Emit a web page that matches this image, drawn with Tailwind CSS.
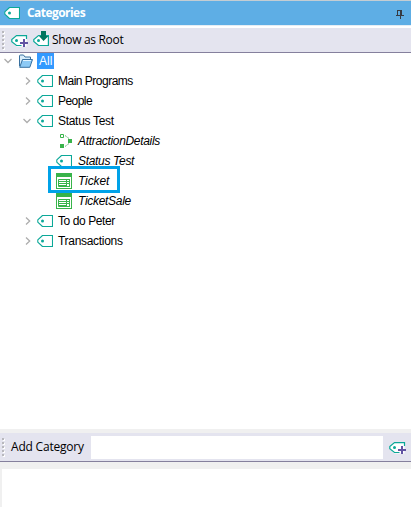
<!DOCTYPE html>
<html lang="en">
<head>
<meta charset="utf-8">
<title>Categories</title>
<script src="https://cdn.jsdelivr.net/npm/@tailwindcss/browser@4"></script>
</head>
<body class="w-[411px] h-[507px] overflow-hidden bg-white text-black">
<svg class="hidden">
  <symbol id="tag" viewBox="0 0 16 12"><path d="M5.5 .5H15.5V11.5H5.5L.8 7.2V4.8Z" fill="#fff" stroke="#0ba898" stroke-width="1.1" stroke-linejoin="round"/><circle cx="5.5" cy="6" r="1.5" fill="#0ba898"/></symbol>
  <symbol id="tagplus" viewBox="0 0 17 13"><path d="M5.5 .5H15.5V11.5H5.5L.8 7V4.5Z" fill="#fff"/><path d="M10.5 10.5H5.5L.8 6.8V4.5L5.5 .6H15.5V4" fill="none" stroke="#0ba898" stroke-width="1.2"/><circle cx="5.5" cy="5.5" r="1.5" fill="#0ba898"/><path d="M13 4V12M9 8H17" stroke="#6254a3" stroke-width="2"/></symbol>
  <symbol id="right" viewBox="0 0 6 8"><path d="M1 .5L4.7 4L1 7.5" fill="none" stroke="#adadad" stroke-width="1.3"/></symbol>
  <symbol id="down" viewBox="0 0 8 6"><path d="M.5 1L4 4.5L7.5 1" fill="none" stroke="#adadad" stroke-width="1.3"/></symbol>
  <symbol id="form" viewBox="0 0 16 16"><path d="M0 0H16V16H0Z" fill="#38b34a"/><path d="M1 4H15V15H1Z" fill="#fff"/><path d="M2.5 6.5H13.5V13.5H2.5ZM2.5 8.5H13.5M2.5 10.5H13.5M2.5 12.5H13.5" fill="none" stroke="#38b34a"/><path d="M10 6H14V14H10Z" fill="#38b34a"/><path d="M11 7h2v1h-2zM11 9h2v1h-2zM11 11h2v2h-2z" fill="#fff"/></symbol>
  <symbol id="grip" viewBox="0 0 5 20"><path d="M1 1h2v2h-2zM1 5h2v2h-2zM1 9h2v2h-2zM1 13h2v2h-2zM1 17h2v2h-2z" fill="#fff" transform="translate(1 1)"/><path d="M1 1h2v2h-2zM1 5h2v2h-2zM1 9h2v2h-2zM1 13h2v2h-2zM1 17h2v2h-2z" fill="#b8b8bd"/></symbol>
</svg>
<div class="flex flex-col h-full">
  <header class="h-[26px] shrink-0 flex items-center bg-[#5eaee5] border-t border-t-[#c4cdd3] border-b border-b-[#e4edf5] pl-1 pr-[7px]">
    <svg class="w-4 h-3"><use href="#tag"/></svg>
    <h1 class="ml-[7px] font-['Open_Sans',sans-serif] font-bold text-[12px] leading-4 tracking-[-0.55px] text-white">Categories</h1>
    <svg class="ml-auto w-[8px] h-[9px] mt-0.5" viewBox="0 0 8 9" shape-rendering="crispEdges"><path d="M1 0H6V5H8V6H5V9H4V6H0V5H1ZM2 1V5H4V1Z" fill="#363b43" fill-rule="evenodd"/></svg>
  </header>
  <div class="mt-[2px] h-[25px] shrink-0 flex items-center bg-[#e4e4ef] border-b border-[#85809d] pl-px">
    <svg class="w-[5px] h-5"><use href="#grip"/></svg>
    <svg class="ml-[5px] w-[17px] h-[13px] mt-0.5"><use href="#tagplus"/></svg>
    <svg class="ml-[5px] w-4 h-4 -mt-0.5" viewBox="0 0 16 16"><path d="M5.5 4.5H15.4V14.5H5.5L.8 10.5V8.5Z" fill="#fff" stroke="#0ba898" stroke-width="1.2"/><circle cx="5.5" cy="9.5" r="1.5" fill="#0ba898"/><path d="M8 0H13V5H15.5L10.5 10L6 5H8Z" fill="#00755f"/></svg>
    <span class="ml-[3px] font-['Open_Sans',sans-serif] text-[12px] leading-4 tracking-[-0.32px] whitespace-nowrap">Show as Root</span>
  </div>
  <main class="flex-1 font-['Liberation_Sans',Arial,sans-serif] text-[12px] leading-4 whitespace-nowrap">
    <div class="h-[18px] flex items-center pb-[2px] pl-1">
      <svg class="w-2 h-1.5"><use href="#down"/></svg>
      <svg class="ml-[7px] w-[14px] h-[14px]" viewBox="0 0 14 14"><path d="M.5 12V2Q.5 1 1.5 1H4.5L6 3H11.5V5.5" fill="#d7edfb" stroke="#38709f"/><path d="M3.5 5.5H13.5L10.8 13.3H.7Z" fill="#8dcaf5" stroke="#38709f"/><path d="M4 6.5H12" stroke="#e2f4ff"/></svg>
      <span class="ml-1 w-[17px] h-4 bg-[#3399ff] text-white pl-0.5">All</span>
    </div>
    <div class="h-5 flex items-center pl-[25px]"><svg class="w-1.5 h-2"><use href="#right"/></svg><svg class="ml-[6px] w-4 h-3"><use href="#tag"/></svg><span class="ml-[5px] tracking-[-0.5px]">Main Programs</span></div>
    <div class="h-5 flex items-center pl-[25px]"><svg class="w-1.5 h-2"><use href="#right"/></svg><svg class="ml-[6px] w-4 h-3"><use href="#tag"/></svg><span class="ml-[5px] tracking-[-0.55px]">People</span></div>
    <div class="h-5 flex items-center pl-[23px]"><svg class="w-2 h-1.5"><use href="#down"/></svg><svg class="ml-[6px] w-4 h-3"><use href="#tag"/></svg><span class="ml-[5px] tracking-[-0.3px]">Status Test</span></div>
    <div class="h-5 flex items-center pl-[60px]"><svg class="w-3 h-[14px]" viewBox="0 0 12 14"><path d="M.5 .5H3.5V3.5H.5Z" fill="none" stroke="#38b34a"/><path d="M8 5H12V9H8ZM0 10H4V14H0Z" fill="#38b34a"/><path d="M5 1.5L9 4.5M9 9.5L5 12.5" stroke="#6bb87a" stroke-dasharray="2 1"/></svg><span class="ml-[6px] italic tracking-[-0.32px]">AttractionDetails</span></div>
    <div class="h-5 flex items-center pl-[56px]"><svg class="w-4 h-3"><use href="#tag"/></svg><span class="ml-[6px] italic tracking-[-0.32px]">Status Test</span></div>
    <div class="relative h-5 flex items-center pl-[56px]"><svg class="w-4 h-4"><use href="#form"/></svg><span class="ml-[6px] italic tracking-[-0.1px]">Ticket</span><div class="absolute left-[48px] -top-[5px] w-[72px] h-[27px] border-3 border-[#00a2e8]"></div></div>
    <div class="h-5 flex items-center pl-[56px]"><svg class="w-4 h-4"><use href="#form"/></svg><span class="ml-[6px] italic tracking-[-0.3px]">TicketSale</span></div>
    <div class="h-5 flex items-center pl-[25px]"><svg class="w-1.5 h-2"><use href="#right"/></svg><svg class="ml-[6px] w-4 h-3"><use href="#tag"/></svg><span class="ml-[5px] tracking-[-0.42px]">To do Peter</span></div>
    <div class="h-5 flex items-center pl-[25px]"><svg class="w-1.5 h-2"><use href="#right"/></svg><svg class="ml-[6px] w-4 h-3"><use href="#tag"/></svg><span class="ml-[5px] tracking-[-0.3px]">Transactions</span></div>
  </main>
  <footer class="h-[78px] shrink-0 bg-[#f0f0f0] pt-1 flex flex-col">
    <div class="h-[29px] shrink-0 flex items-center bg-[#e4e4ef] border-b border-[#85809d] pl-px pr-[5px]">
      <svg class="w-[5px] h-5"><use href="#grip"/></svg>
      <label for="category" class="ml-[5px] w-20 font-['Open_Sans',sans-serif] text-[12px] leading-4 tracking-[-0.2px] whitespace-nowrap">Add Category</label>
      <input id="category" class="w-[292px] h-[23px] bg-white outline-none">
      <svg class="ml-auto w-[17px] h-[13px] mt-0.5"><use href="#tagplus"/></svg>
    </div>
    <div class="mt-[7px] ml-[2px] flex-1 bg-white"></div>
  </footer>
</div>
</body>
</html>
